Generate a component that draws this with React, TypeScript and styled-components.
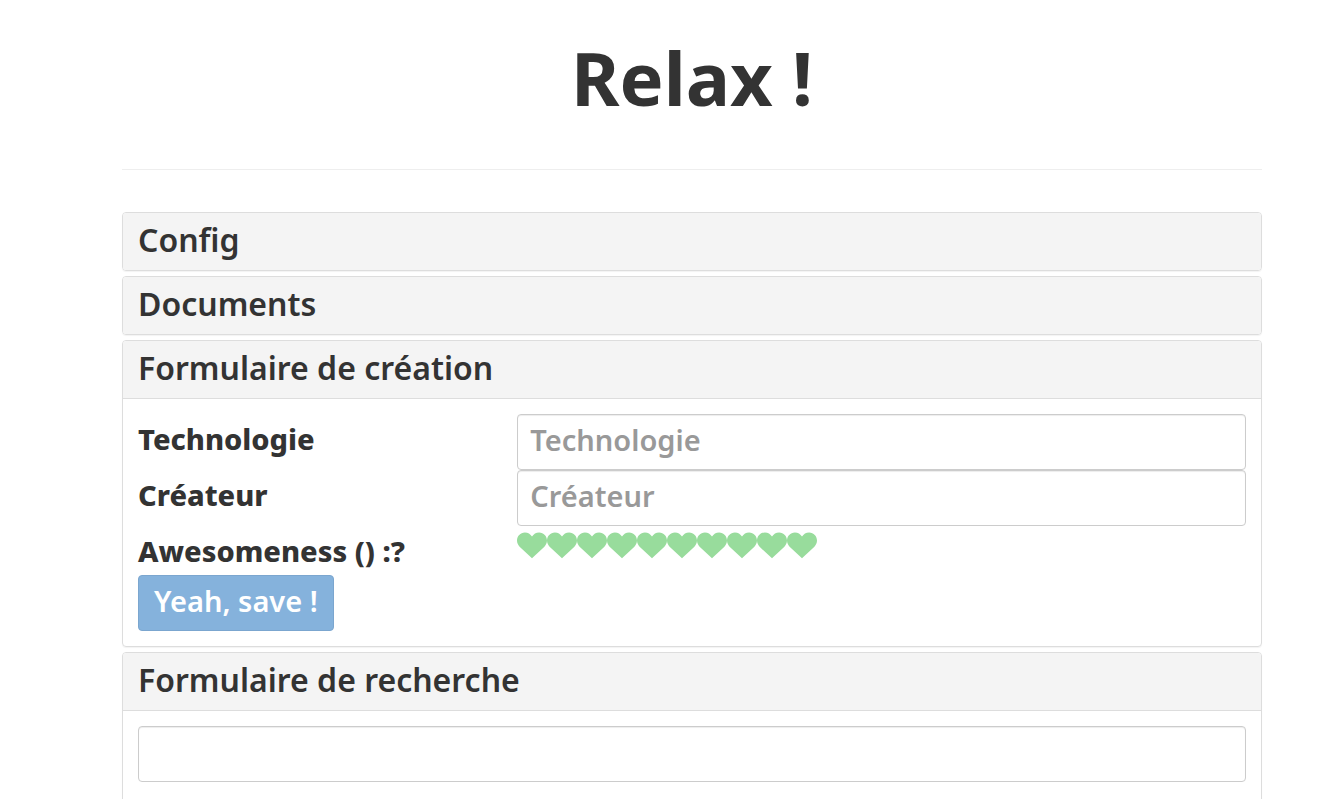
import React, { useState } from "react";
import styled, { createGlobalStyle } from "styled-components";

const GlobalStyle = createGlobalStyle`
  *, *::before, *::after { box-sizing: border-box; }
  html { scrollbar-width: none; }
  body {
    margin: 0;
    background: #fff;
    color: #333;
    font-family: "Noto Sans", "Open Sans", sans-serif;
    font-size: 29px;
    line-height: 42px;
  }
`;

const Page = styled.main`
  padding: 0 72px 0 122px;
`;

const Title = styled.h1`
  margin: 0;
  padding: 38px 0 51px;
  font-size: 74px;
  line-height: 80px;
  font-weight: 700;
  text-align: center;
  border-bottom: 1px solid #eee;
`;

const Accordion = styled.div`
  display: flex;
  flex-direction: column;
  gap: 5px;
  margin-top: 42px;
`;

const Panel = styled.section`
  border: 1px solid #ddd;
  border-radius: 4px;
  box-shadow: 0 1px 1px rgba(0, 0, 0, 0.05);
`;

const PanelTitle = styled.h4<{ $open?: boolean }>`
  margin: 0;
  padding: 8px 15px 12px;
  font-size: 32px;
  line-height: 37px;
  font-weight: 600;
  background: #f4f4f4;
  border-radius: ${(p) => (p.$open ? "3px 3px 0 0" : "3px")};
`;

const PanelLink = styled.a`
  color: inherit;
  text-decoration: none;
`;

const PanelBody = styled.div<{ $tall?: boolean }>`
  min-height: ${(p) => (p.$tall ? "96px" : "0")};
  padding: 15px;
  border-top: 1px solid #ddd;
`;

const FormRow = styled.div`
  display: grid;
  grid-template-columns: 1fr 2fr;
  margin: 0 -15px;
`;

const Cell = styled.div`
  padding: 0 15px;
`;

const Label = styled.label`
  display: block;
  padding: 4px 0 3px;
  font-weight: 800;
`;

const TextInput = styled.input`
  display: block;
  width: 100%;
  height: 56px;
  padding: 3px 12px 9px;
  font: inherit;
  font-weight: 600;
  color: #555;
  background: #fff;
  border: 1px solid #ccc;
  border-radius: 4px;
  box-shadow: inset 0 1px 1px rgba(0, 0, 0, 0.075);
  &::placeholder { color: #999; opacity: 1; }
`;

const Rating = styled.div`
  display: flex;
  padding-top: 5px;
`;

const HeartButton = styled.button`
  display: block;
  width: 30px;
  height: 30px;
  padding: 0;
  border: 0;
  background: none;
  color: #98dc9c;
  cursor: pointer;
  svg { display: block; }
`;

const SaveButton = styled.button`
  height: 56px;
  display: block;
  padding: 0 15px 4px;
  font: inherit;
  font-weight: 600;
  color: #fff;
  background: #85b2dc;
  border: 1px solid #7ba6cf;
  border-radius: 4px;
`;

const Heart = () => (
  <svg width="30" height="30" viewBox="0 0 30 30" aria-hidden="true">
    <path
      fill="currentColor"
      d="M15 27.3 2.600 15.800C1 14.100 0 12 0 9.600 0 5 3.300 1.400 7.900 1.400c3 0 5.600 1.600 7.100 4.100 1.500-2.500 4.100-4.100 7.100-4.100C26.700 1.400 30 5 30 9.600c0 2.400-1 4.500-2.600 6.200Z"
    />
  </svg>
);

const fields = [
  { id: "technologie", label: "Technologie" },
  { id: "createur", label: "Créateur" },
];

export default function App() {
  const [rating, setRating] = useState(0);
  return (
    <>
      <GlobalStyle />
      <Page>
        <Title>Relax !</Title>
        <Accordion>
          <Panel>
            <PanelTitle><PanelLink href="#config">Config</PanelLink></PanelTitle>
          </Panel>
          <Panel>
            <PanelTitle><PanelLink href="#documents">Documents</PanelLink></PanelTitle>
          </Panel>
          <Panel>
            <PanelTitle $open><PanelLink href="#creation">Formulaire de création</PanelLink></PanelTitle>
            <PanelBody as="form" onSubmit={(e: React.FormEvent) => e.preventDefault()}>
              {fields.map((f) => (
                <FormRow key={f.id}>
                  <Cell><Label htmlFor={f.id}>{f.label}</Label></Cell>
                  <Cell><TextInput id={f.id} placeholder={f.label} /></Cell>
                </FormRow>
              ))}
              <FormRow>
                <Cell><Label as="div" id="awesomeness">Awesomeness ({rating || ""}) :?</Label></Cell>
                <Cell>
                  <Rating role="group" aria-labelledby="awesomeness">
                    {Array.from({ length: 10 }, (_, i) => (
                      <HeartButton key={i} type="button" aria-label={`${i + 1}`} onClick={() => setRating(i + 1)}>
                        <Heart />
                      </HeartButton>
                    ))}
                  </Rating>
                </Cell>
              </FormRow>
              <SaveButton type="submit">Yeah, save !</SaveButton>
            </PanelBody>
          </Panel>
          <Panel>
            <PanelTitle $open><PanelLink href="#recherche">Formulaire de recherche</PanelLink></PanelTitle>
            <PanelBody $tall>
              <TextInput type="search" aria-label="Formulaire de recherche" />
            </PanelBody>
          </Panel>
        </Accordion>
      </Page>
    </>
  );
}
